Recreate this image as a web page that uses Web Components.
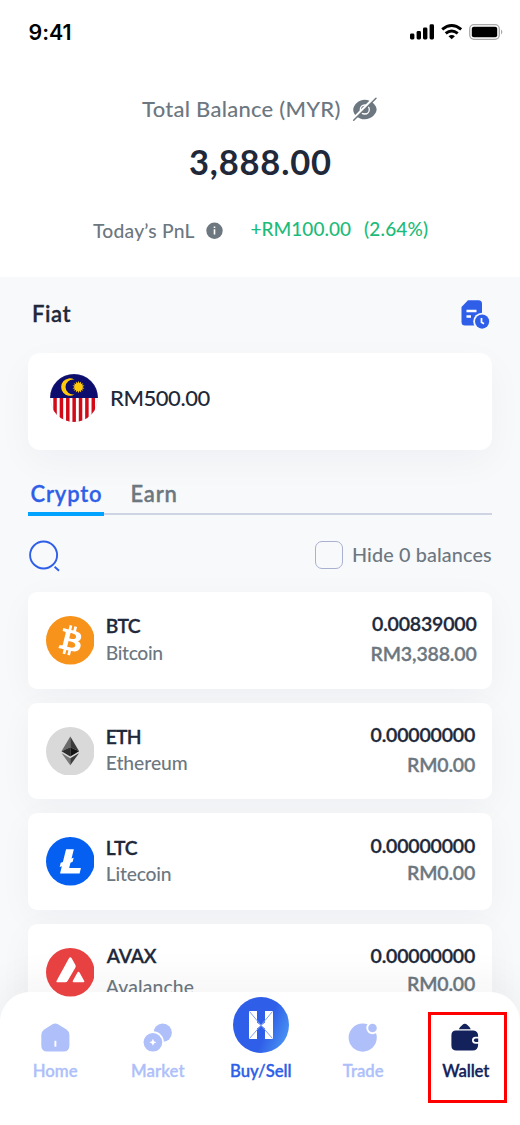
<!DOCTYPE html>
<html lang="en">
<head>
<meta charset="utf-8">
<title>Wallet</title>
<style>
html,body{margin:0;padding:0}
body{width:520px;height:1125px;overflow:hidden;background:#fff;font-family:Lato,"Open Sans",sans-serif;color:#20283a}
</style>
</head>
<body>
<wallet-app></wallet-app>
<script>
const define = (name, html, setup) => customElements.define(name, class extends HTMLElement {
  connectedCallback() {
    if (this.shadowRoot) return;
    const root = this.attachShadow({ mode: 'open' });
    root.innerHTML = typeof html === 'function' ? html(this) : html;
    if (setup) setup(this, root);
  }
});

// A single line of text, tracked so that its ink spans the width in "w".
const pen = document.createElement('canvas').getContext('2d');
define('fit-text', `<style>
  :host{display:block;flex:none;white-space:nowrap;line-height:24px;height:24px}
  :host([b="600"]){-webkit-text-stroke:.3px currentColor}
  span{display:inline-block}
</style><span><slot></slot></span>`, (el, root) => {
  const text = el.textContent, w = +el.getAttribute('w');
  el.style.fontSize = el.getAttribute('s') + 'px';
  el.style.fontWeight = el.getAttribute('b') || 500;
  el.style.width = w + 'px';
  const cs = getComputedStyle(el);
  pen.font = `${cs.fontWeight} ${cs.fontSize} ${cs.fontFamily}`;
  const m = pen.measureText(text);
  const ink = m.actualBoundingBoxRight + m.actualBoundingBoxLeft;
  const span = root.querySelector('span');
  span.style.letterSpacing = (w - ink) / (text.length - 1) + 'px';
  span.style.marginLeft = m.actualBoundingBoxLeft + 'px';
});

define('status-bar', `<style>
  :host{display:flex;height:60px;box-sizing:border-box;padding:20px 16px 0 29.500px;justify-content:space-between;color:#000;font-family:Inter,sans-serif}
  svg{display:block}
  fit-text{-webkit-text-stroke:0}
</style>
<fit-text w="41" s="21.4" b="600">9:41</fit-text>
<svg width="96" height="24" viewBox="408 20 96 24">
  <rect x="410" y="33.5" width="4.4" height="6" rx="1.4"/><rect x="416.6" y="31" width="4.4" height="8.500" rx="1.400"/>
  <rect x="423" y="27.500" width="4.400" height="12" rx="1.400"/><rect x="429.600" y="24.300" width="4.400" height="15.200" rx="1.400"/>
  <g fill="none" stroke="#000" stroke-width="3"><path d="M442.200 29.300Q451.700 21.600 461.200 29.300"/><path d="M445.700 33.400Q451.700 28.500 457.700 33.400"/></g>
  <path d="M448.500 36.300Q451.700 33.700 454.900 36.300L451.700 39.300Z"/>
  <rect x="469.700" y="24.700" width="29.600" height="14.600" rx="4.200" fill="none" stroke="#aaa" stroke-width="1.300"/>
  <rect x="471.800" y="26.800" width="25.400" height="10.400" rx="2"/>
  <path d="M501 29.500a3 3 0 0 1 0 5z" fill="#aaa"/>
</svg>`);

define('balance-summary', `<style>
  :host{display:block;height:217px;color:#6c7780}
  .row{display:flex}
  .total{padding:36.500px 0 0 142px;gap:12px}
  .total svg{margin-top:-.5px}
  .value{padding:27.500px 0 0 190px;color:#20283a}
  .pnl{padding:43px 0 0 93px;align-items:flex-start}
  .pnl fit-text:first-child{margin-top:2px}
  .pnl svg{margin:5px 28px 0 11px}
  .up{color:#1dbb79}
  .up+.up{margin-left:13px}
  svg{display:block;flex:none}
</style>
<div class="row total"><fit-text w="197.500" s="22">Total Balance (MYR)</fit-text>
<svg width="26" height="26" viewBox="352 96 26 26"><path d="M353.200 109.700C353.200 105.500 358 99.700 364.800 99.700S376.600 105.500 376.600 109.500S371.500 119.300 364.800 119.300S353.200 114.500 353.200 109.700Z" fill="#6c7780"/><circle cx="364.800" cy="109.500" r="4.500" fill="none" stroke="#fff" stroke-width="1.300"/><path d="M352 120L375.300 96.700" stroke="#fff" stroke-width="2.600"/><path d="M353.700 120.200L376 98.300" stroke="#6c7780" stroke-width="1.500" stroke-linecap="round"/></svg></div>
<div class="row value"><fit-text w="141" s="34.500" b="700">3,888.00</fit-text></div>
<div class="row pnl"><fit-text w="101.500" s="19.300">Today’s PnL</fit-text>
<svg width="17" height="17" viewBox="0 0 17 17"><circle cx="8.500" cy="8.800" r="8.200" fill="#6c7780"/><path d="M8.500 7.300v5.200M8.500 4.400v1.500" stroke="#fff" stroke-width="1.600"/></svg>
<fit-text class="up" w="100.500" s="19">+RM100.00</fit-text><fit-text class="up" w="64" s="19">(2.64%)</fit-text></div>`);

define('fiat-section', `<style>
  :host{display:block;padding:20px 28px 0}
  .head{display:flex;height:56px;padding-left:5px;justify-content:space-between;box-sizing:border-box}
  .head fit-text{margin-top:4.500px}
  .card{height:97px;border-radius:12px;background:#fff;box-shadow:0 12px 36px rgba(30,35,45,.04);display:flex;align-items:center;padding:0 0 7px 22px;box-sizing:border-box}
  .card fit-text{margin:-1px 0 0 13px}
  svg{display:block;flex:none}
</style>
<div class="head"><fit-text w="37.500" s="22" b="600">Fiat</fit-text>
<svg width="32" height="34" viewBox="460.500 297 32 34"><path d="M468.500 300.300H479Q482.500 300.300 482.500 303.800V322Q482.500 325.500 479 325.500H465.500Q462 325.500 462 322V307Z" fill="#2f5fe8"/><path d="M467 311h10M467 316.500h4.500" stroke="#fff" stroke-width="2.300"/><circle cx="482.600" cy="321.600" r="8.900" fill="#f8f9fb"/><circle cx="482.600" cy="321.600" r="7.100" fill="#2f5fe8"/><path d="M482 318v4.300l2.500 1.500" fill="none" stroke="#fff" stroke-width="1.700"/></svg></div>
<div class="card"><flag-my></flag-my><fit-text w="99.500" s="22">RM500.00</fit-text></div>`);

define('flag-my', () => {
  let pts = '', bars = '';
  for (let i = 0; i < 28; i++) {
    const r = i % 2 ? 3.8 : 6.2, a = i * Math.PI / 14;
    pts += `${(28.5 + r * Math.sin(a)).toFixed(2)},${(13 - r * Math.cos(a)).toFixed(2)} `;
  }
  for (let i = 0; i < 7; i++) bars += `<rect x="${(3.3 + i * 6.37).toFixed(2)}" y="23" width="3.5" height="26" fill="#d20a18"/>`;
  return `<style>:host{display:block;width:48px;height:48px;border-radius:50%;overflow:hidden}svg{display:block}</style>
  <svg width="48" height="48" viewBox="0 0 48 48"><circle cx="24" cy="24" r="24" fill="#fff"/>${bars}<rect width="48" height="24" fill="#0c0d6c"/>
  <path d="M24.500 5.700A8.700 8.700 0 1 0 24.500 20.400A7.500 7.500 0 1 1 24.500 5.700Z" fill="#ffca0a"/><polygon points="${pts}" fill="#ffca0a"/><circle cx="24" cy="24" r="23.700" fill="none" stroke="#7a7ca8" stroke-opacity=".25" stroke-width=".6"/></svg>`;
});

define('asset-tabs', `<style>
  :host{display:flex;margin:32px 28px 0;height:34px;box-sizing:border-box;background:linear-gradient(#cfd4e4,#cfd4e4) 0 31px/100% 2px no-repeat}
  div{height:34px;box-sizing:border-box}
  .on{width:76px;padding-left:2.500px;color:#2f5fe8;border-bottom:4px solid #00a3ff}
  .off{color:#6c7780;margin-left:27.500px}
</style>
<div class="on"><fit-text w="70.500" s="22" b="600">Crypto</fit-text></div>
<div class="off"><fit-text w="45" s="22" b="600">Earn</fit-text></div>`);

define('asset-filter', `<style>
  :host{display:flex;margin:0 28px;height:76px;box-sizing:border-box;padding-top:24px;color:#6c7780}
  svg{display:block}
  i{box-sizing:border-box;width:28px;height:28px;border:1.500px solid #aab0cf;border-radius:7px;margin:1px 10.500px 0 auto}
  fit-text{margin:2px 1px 0 0}
</style>
<svg width="34" height="34" viewBox="28 539.500 34 34" fill="none" stroke="#2f5fe8" stroke-width="1.900"><circle cx="43.600" cy="554.500" r="13.500"/><path d="M54.600 566.200L59 570.200"/></svg>
<i></i><fit-text w="138" s="19.800">Hide 0 balances</fit-text>`);

// Attributes: sym/name and amount/fiat are "text|width"; y holds the four line tops.
define('coin-row', el => {
  const [sym, name, amount, fiat] = ['sym', 'name', 'amount', 'fiat'].map(k => el.getAttribute(k).split('|'));
  const y = el.getAttribute('y').split(' ').map(Number);
  return `<style>
  :host{display:flex;height:96.700px;box-sizing:border-box;border-radius:9px;background:#fff;box-shadow:0 8px 34px rgba(30,35,45,.04);padding:0 ${el.getAttribute('r')}px 0 17.700px}
  .icon{margin-top:24px;width:48.600px;height:48.600px;position:relative;z-index:2}
  .l{margin-left:${el.getAttribute('gap') || 12.5}px;padding-top:${y[0]}px;flex:1}
  .l fit-text+fit-text{margin-top:${y[1] - y[0] - 24}px;color:#6c7780}
  .r{padding-top:${y[2]}px;display:flex;flex-direction:column;align-items:flex-end}
  .r fit-text+fit-text{margin-top:${y[3] - y[2] - 24}px;color:#6c7780}
  </style>
  <div class="icon"><slot></slot></div>
  <div class="l"><fit-text w="${sym[1]}" s="19.300" b="600">${sym[0]}</fit-text><fit-text w="${name[1]}" s="19.300">${name[0]}</fit-text></div>
  <div class="r"><fit-text w="${amount[1]}" s="19.500" b="600">${amount[0]}</fit-text><fit-text w="${fiat[1]}" s="19.500" b="600">${fiat[0]}</fit-text></div>`;
});

const coins = {
  btc: `<circle cx="16" cy="16" r="16" fill="#f7931a"/><path fill="#fff" d="M23.189 14.02c.314-2.096-1.283-3.223-3.465-3.975l.708-2.84-1.728-.43-.69 2.765c-.454-.114-.92-.22-1.385-.326l.695-2.783L15.596 6l-.708 2.839c-.376-.086-.746-.17-1.104-.26l.002-.009-2.384-.595-.46 1.846s1.283.294 1.256.312c.7.175.826.638.805 1.006l-.806 3.235c.048.012.11.03.18.057l-.183-.045-1.13 4.532c-.086.212-.303.531-.793.41.018.025-1.256-.313-1.256-.313l-.858 1.978 2.25.561c.418.105.828.215 1.231.318l-.715 2.872 1.727.43.708-2.84c.472.127.93.245 1.378.357l-.706 2.828 1.728.43.715-2.866c2.948.558 5.164.333 6.097-2.333.752-2.146-.037-3.385-1.588-4.192 1.13-.26 1.98-1.003 2.207-2.538zm-3.95 5.538c-.533 2.147-4.148.986-5.32.695l.95-3.805c1.172.293 4.929.872 4.37 3.11zm.535-5.569c-.487 1.953-3.495.96-4.47.717l.86-3.45c.975.243 4.118.696 3.61 2.733z"/>`,
  eth: `<circle cx="16" cy="16" r="16" fill="#d9d9d9"/><path fill="#6b6b6b" d="M16 6.300L10.200 16L16 13.400z"/><path fill="#3a3a3a" d="M16 6.300L21.800 16L16 13.400z"/><path fill="#2e2e2e" d="M10.200 16L16 13.400V19.400z"/><path fill="#141414" d="M21.800 16L16 13.400V19.400z"/><path fill="#777" d="M10.200 17.200L16 20.600V25.200z"/><path fill="#3c3c3c" d="M21.800 17.200L16 20.600V25.200z"/>`,
  ltc: `<circle cx="16" cy="16" r="16" fill="#0560f2"/><path fill="#fff" d="M10.427 19.214L9 19.768l.688-2.759 1.444-.58L13.213 8h5.129l-1.519 6.196 1.410-.571-.68 2.750-1.427.571-.848 3.483H23L22.127 24H9.252z"/>`,
  avax: `<circle cx="16" cy="16" r="16" fill="#e84142"/><path fill="#fff" d="M15.200 6.600Q16 5.500 16.800 6.600L19.300 11Q19.900 12 19.300 13L14.200 21.800Q13.700 22.600 12.800 22.600H7.400Q6.400 22.600 7 21.500ZM20.700 16.200Q21.400 15.200 22.100 16.200L25.100 21.500Q25.600 22.600 24.700 22.600H18.300Q17.200 22.600 17.700 21.500Z"/>`
};
define('coin-icon', el => `<style>:host,svg{display:block}</style><svg width="48.600" height="48.600" viewBox="0 0 32 32">${coins[el.getAttribute('kind')]}</svg>`);

define('coin-list', `<style>:host{display:flex;flex-direction:column;gap:14px;padding:0 28px}</style>
<coin-row sym="BTC|34" name="Bitcoin|55.500" amount="0.00839000|104.500" fiat="RM3,388.00|105" y="22.200 48.700 19.600 50" r="15.500"><coin-icon kind="btc"></coin-icon></coin-row>
<coin-row sym="ETH|34" name="Ethereum|80" amount="0.00000000|104.500" fiat="RM0.00|67" y="22.500 48.700 19.900 50.200" r="17"><coin-icon kind="eth"></coin-icon></coin-row>
<coin-row sym="LTC|31" name="Litecoin|64" amount="0.00000000|104.500" fiat="RM0.00|67" y="22.800 49 20.200 48" r="17"><coin-icon kind="ltc"></coin-icon></coin-row>
<coin-row sym="AVAX|51" name="Avalanche|88" amount="0.00000000|104.500" fiat="RM0.00|67" y="20 50.700 20.200 48.200" r="17" gap="11.500"><coin-icon kind="avax"></coin-icon></coin-row>`);

define('nav-item', `<style>
  :host{display:flex;flex:1;flex-direction:column;align-items:center;color:#aebffa}
  .pic{height:67px;display:flex;align-items:center;box-sizing:border-box}
</style><div class="pic"><slot name="icon"></slot></div><slot></slot>`);

define('bottom-nav', `<style>
  :host{position:absolute;left:0;right:0;bottom:0;z-index:1;height:133px;box-sizing:border-box;background:#fff;border-radius:30px 30px 0 0;box-shadow:0 -10px 40px rgba(40,40,40,.05);display:flex;padding:0 3px 0 4.500px}
  svg{display:block}
  nav-item svg{margin:23.500px 1px 0 0}
  .buy{color:#2f5fe8}
  .buy svg{margin:0}
  .now{color:#14225c}
  .mark{position:absolute;left:428px;top:20px;width:79px;height:91px;box-sizing:border-box;border:3px solid #fe0000}
</style>
<nav-item><svg slot="icon" width="30" height="30" viewBox="40 1022 30 30"><path d="M52.500 1024.300Q55.300 1022.700 58 1024.300L66.500 1029.500Q69.400 1031.500 69.400 1035V1045.500Q69.400 1051.500 63.500 1051.500H47.300Q41.300 1051.500 41.300 1045.500V1035Q41.300 1031.500 44.200 1029.500Z" fill="#aebffa"/><path d="M55.400 1040.800v5.900" stroke="#fff" stroke-width="1.900"/></svg><fit-text w="44" s="16.700" b="600">Home</fit-text></nav-item>
<nav-item><svg slot="icon" width="30" height="30" viewBox="143.500 1022 30 30"><circle cx="163.200" cy="1032.700" r="9.200" fill="#aebffa"/><circle cx="153.400" cy="1042.300" r="11" fill="#fff"/><circle cx="153.400" cy="1042.300" r="9.300" fill="#aebffa"/><path d="M153.400 1038.800l1.100 2.400 2.400 1.100-2.400 1.100-1.100 2.400-1.100-2.400-2.400-1.100 2.400-1.100z" fill="#fff"/></svg><fit-text w="52.500" s="16.700" b="600">Market</fit-text></nav-item>
<nav-item class="buy"><svg slot="icon" width="56" height="57" viewBox="0 0 56 57"><defs><linearGradient id="g" x1="0" y1=".3" x2="1" y2=".7"><stop offset=".6" stop-color="#2f5ee8"/><stop offset="1" stop-color="#4a94f3"/></linearGradient></defs><circle cx="28" cy="28" r="28" fill="url(#g)"/><path d="M16 14h8v11.500l4 3 4-3V14h8v28h-8V31.500l-4-3-4 3V42h-8z" fill="#fff"/><path d="M16.500 14.500L28 28.300 16.500 41.500M39.500 14.500L28 28.300 39.500 41.500" fill="none" stroke="#7f9ff3" stroke-width="1"/></svg><fit-text w="59.500" s="16.700" b="600">Buy/Sell</fit-text></nav-item>
<nav-item><svg slot="icon" width="30" height="30" viewBox="348.500 1022 30 30"><circle cx="363.200" cy="1037.600" r="14.100" fill="#aebffa"/><circle cx="373" cy="1028" r="6.200" fill="#fff"/><circle cx="373" cy="1028" r="4.300" fill="#aebffa"/></svg><fit-text w="41" s="16.700" b="600">Trade</fit-text></nav-item>
<nav-item class="now"><svg slot="icon" width="30" height="30" viewBox="451 1022 30 30"><path d="M459.800 1029.200Q460.200 1027.300 463.300 1024.900Q465.800 1022.700 468.400 1024.900Q471.400 1027.300 471.800 1029.200Z" fill="#14225c"/><path d="M457 1030.500H474.500Q479.200 1030.700 479.200 1036.800H476.500Q473 1037 473 1040.300T476.500 1043.700H479.200Q479.200 1050.600 473.500 1050.600H457.500Q452.400 1050.600 452.400 1045.500V1035.500Q452.400 1030.500 457 1030.500Z" fill="#14225c"/><path d="M479.200 1038.500H476.700a1.800 1.800 0 0 0 0 3.600H479.200Z" fill="#14225c"/></svg><fit-text w="47" s="16.700" b="600">Wallet</fit-text></nav-item>
<div class="mark"></div>`);

define('wallet-app', `<style>
  :host{display:block;position:relative;width:520px;height:1125px;overflow:hidden;background:#fff}
  main{background:#f8f9fb;height:848px}
</style>
<status-bar></status-bar><balance-summary></balance-summary>
<main><fiat-section></fiat-section><asset-tabs></asset-tabs><asset-filter></asset-filter><coin-list></coin-list></main>
<bottom-nav></bottom-nav>`);
</script>
</body>
</html>
